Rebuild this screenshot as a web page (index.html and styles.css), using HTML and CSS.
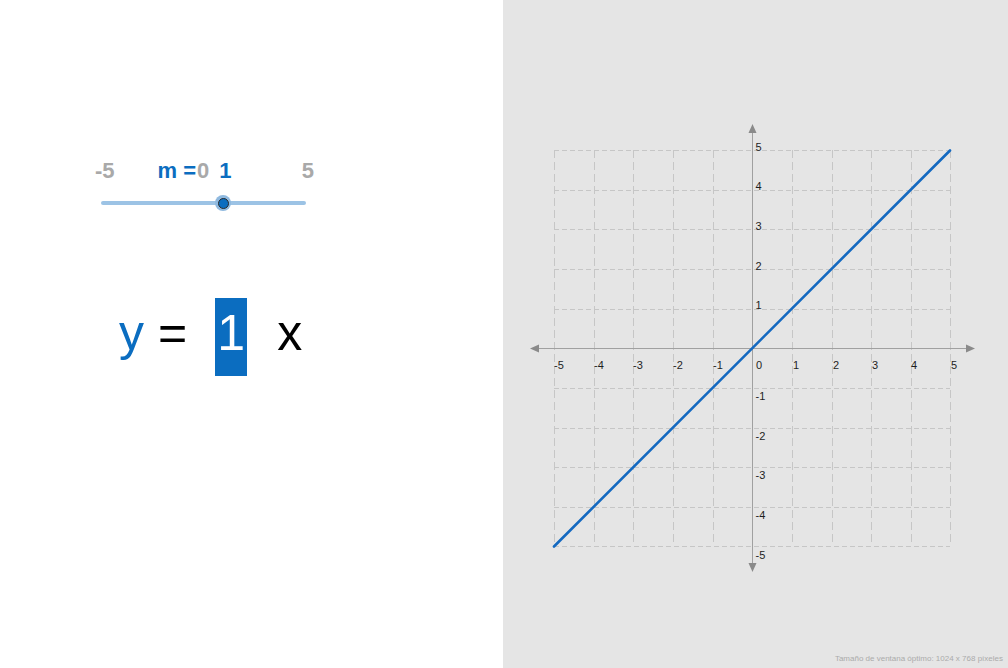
FILE: index.html
```html
<!DOCTYPE html>
<html lang="es">
<head>
<meta charset="utf-8">
<title>Pendiente</title>
<link rel="stylesheet" href="styles.css">
</head>
<body>
<div class="app">
  <section class="left">
    <div class="slider">
      <div class="slider-labels">
        <span class="lbl gray min">-5</span>
        <span class="lbl blue name">m =</span>
        <span class="lbl gray zero">0</span>
        <span class="lbl blue val">1</span>
        <span class="lbl gray max">5</span>
      </div>
      <div class="track-wrap">
        <div class="track">
          <div class="knob"><div class="knob-core"></div></div>
        </div>
      </div>
    </div>
    <div class="equation">
      <span class="eq-y">y</span>
      <span class="eq-eq">=</span>
      <span class="eq-box">1</span>
      <span class="eq-x">x</span>
    </div>
  </section>
  <section class="right">
    <svg class="graph" width="505" height="650" viewBox="0 0 505 650" xmlns="http://www.w3.org/2000/svg">
      <g class="grid-h" stroke="#c6c6c6" stroke-width="1" stroke-dasharray="5 3" fill="none">
        <line x1="51" y1="150.5" x2="447" y2="150.5"/>
        <line x1="51" y1="190.5" x2="447" y2="190.5"/>
        <line x1="51" y1="229.5" x2="447" y2="229.5"/>
        <line x1="51" y1="269.5" x2="447" y2="269.5"/>
        <line x1="51" y1="309.5" x2="447" y2="309.5"/>
        <line x1="51" y1="388.5" x2="447" y2="388.5"/>
        <line x1="51" y1="428.5" x2="447" y2="428.5"/>
        <line x1="51" y1="467.5" x2="447" y2="467.5"/>
        <line x1="51" y1="507.5" x2="447" y2="507.5"/>
        <line x1="51" y1="546.5" x2="447" y2="546.5"/>
      </g>
      <g class="grid-v" stroke="#c6c6c6" stroke-width="1" stroke-dasharray="8 4" fill="none">
        <line x1="51.5" y1="150" x2="51.5" y2="546"/>
        <line x1="91.5" y1="150" x2="91.5" y2="546"/>
        <line x1="130.5" y1="150" x2="130.5" y2="546"/>
        <line x1="170.5" y1="150" x2="170.5" y2="546"/>
        <line x1="210.5" y1="150" x2="210.5" y2="546"/>
        <line x1="289.5" y1="150" x2="289.5" y2="546"/>
        <line x1="329.5" y1="150" x2="329.5" y2="546"/>
        <line x1="368.5" y1="150" x2="368.5" y2="546"/>
        <line x1="408.5" y1="150" x2="408.5" y2="546"/>
        <line x1="447.5" y1="150" x2="447.5" y2="546"/>
      </g>
      <g class="axes" stroke="#a0a0a0" stroke-width="1">
        <line x1="33" y1="348.5" x2="466" y2="348.5"/>
        <line x1="249.5" y1="132" x2="249.5" y2="565"/>
      </g>
      <g fill="#8a8a8a">
        <polygon points="27,348.5 36,344.5 36,352.5"/>
        <polygon points="472,348.5 463,344.5 463,352.5"/>
        <polygon points="249.5,124 245.5,133 253.5,133"/>
        <polygon points="249.5,572 245.5,563 253.5,563"/>
      </g>
      <g class="xl" font-family="'Liberation Sans', Arial, sans-serif" font-size="11" fill="#1e1e1e">
        <text x="51" y="369">-5</text>
        <text x="91" y="369">-4</text>
        <text x="130" y="369">-3</text>
        <text x="170" y="369">-2</text>
        <text x="210" y="369">-1</text>
        <text x="253" y="369">0</text>
        <text x="290" y="369">1</text>
        <text x="330" y="369">2</text>
        <text x="369" y="369">3</text>
        <text x="408" y="369">4</text>
        <text x="448" y="369">5</text>
      </g>
      <g class="yl" font-family="'Liberation Sans', Arial, sans-serif" font-size="11" fill="#1e1e1e">
        <text x="252.5" y="151">5</text>
        <text x="252.5" y="190">4</text>
        <text x="252.5" y="230">3</text>
        <text x="252.5" y="270">2</text>
        <text x="252.5" y="309">1</text>
        <text x="252.5" y="400">-1</text>
        <text x="252.5" y="440">-2</text>
        <text x="252.5" y="479">-3</text>
        <text x="252.5" y="519">-4</text>
        <text x="252.5" y="559">-5</text>
      </g>
      <line x1="51" y1="546.5" x2="447" y2="150.5" stroke="#1469c0" stroke-width="2.6" stroke-linecap="round"/>
    </svg>
    <div class="footer">Tamaño de ventana óptimo: 1024 x 768 píxeles</div>
  </section>
</div>
</body>
</html>
```

FILE: styles.css
```css
html, body {
  margin: 0;
  padding: 0;
  background: #ffffff;
}

.app {
  display: flex;
  width: 1008px;
  height: 668px;
  overflow: hidden;
  font-family: "Liberation Sans", Arial, sans-serif;
}

.left {
  width: 503px;
  flex: none;
  background: #ffffff;
  display: flex;
  flex-direction: column;
  padding-top: 158px;
  box-sizing: border-box;
}

.slider {
  margin-left: 95px;
  width: 220px;
}

.slider-labels {
  display: flex;
  height: 25px;
  line-height: 25px;
  font-size: 22px;
  font-weight: bold;
  white-space: pre;
  padding-right: 1px;
}

.gray { color: #a9a9a9; }
.blue { color: #0b6dc0; }

.name { margin-left: 43px; }
.zero { margin-left: 1px; }
.val { margin-left: 10px; }
.max { margin-left: auto; }

.track-wrap {
  margin-top: 10px;
  height: 20px;
  display: flex;
  align-items: center;
  padding-left: 6px;
  padding-right: 9px;
}

.track {
  flex: 1;
  height: 4px;
  border-radius: 2px;
  background: #9cc3e5;
  display: flex;
  align-items: center;
  padding-left: 114px;
}

.knob {
  width: 16px;
  height: 16px;
  border-radius: 50%;
  background: #8fb9df;
  display: flex;
  align-items: center;
  justify-content: center;
  flex: none;
}

.knob-core {
  width: 9px;
  height: 9px;
  border-radius: 50%;
  background: #0b6dc0;
  border: 1px solid #2a2a2a;
}

.equation {
  margin-top: 85px;
  display: flex;
  align-items: baseline;
  padding-left: 119px;
  font-size: 50px;
  line-height: 50px;
}

.eq-y { color: #0b6dc0; }
.eq-eq { color: #000; margin-left: 14px; }
.eq-box {
  margin-left: 28px;
  width: 32px;
  padding: 10px 0 18px;
  background: #0b6dc0;
  color: #ffffff;
  text-align: center;
}
.eq-x { color: #000; margin-left: 30px; }

.right {
  flex: 1;
  background: #e5e5e5;
  display: flex;
  flex-direction: column;
}

.graph {
  display: block;
  flex: none;
}

.footer {
  height: 18px;
  line-height: 18px;
  font-size: 8px;
  color: #ababab;
  text-align: right;
  padding-right: 5px;
}
```
